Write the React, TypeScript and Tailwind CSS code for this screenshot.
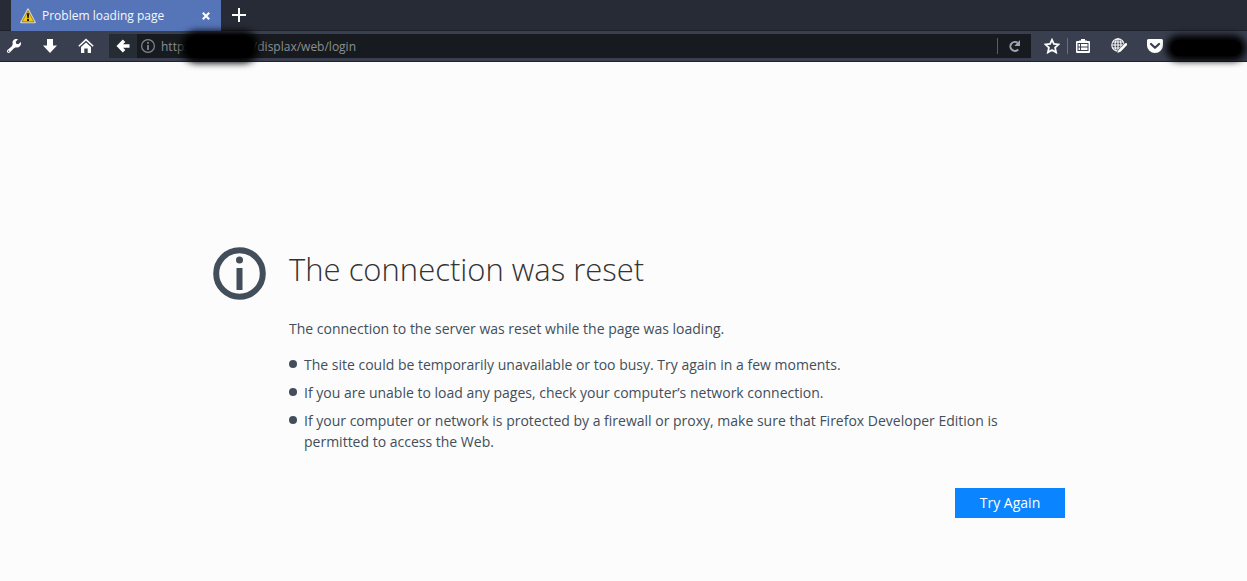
import { useState } from 'react'

const url = 'http:' + '\u00a0'.repeat(21) + '/displax/web/login'

const tips = [
  'The site could be temporarily unavailable or too busy. Try again in a few moments.',
  'If you are unable to load any pages, check your computer’s network connection.',
  'If your computer or network is protected by a firewall or proxy, make sure that Firefox Developer Edition is permitted to access the Web.',
]

function WarningIcon() {
  return (
    <svg viewBox="0 0 16 16" className="h-4 w-4 shrink-0">
      <path d="M8 1.2 15 14.4H1Z" fill="#f5d020" stroke="#d9d6c4" strokeWidth="1.6" strokeLinejoin="round" />
      <path d="M8 2.6 14 13.8H2Z" fill="#f2c811" stroke="#6b5a12" strokeWidth=".6" strokeLinejoin="round" />
      <path d="M6.8 5.2h2.4L8.700 10.200H7.300ZM7 11h2v2H7Z" fill="#1b1b1b" />
    </svg>
  )
}

function WrenchIcon() {
  return (
    <svg viewBox="0 0 16 16" className="h-4 w-4">
      <path
        d="M14.800 4 12.300 6.200 10.200 5.700 9.700 3.700 12 1.300C10.300.6 8.500 1 7.400 2.200 6.500 3.300 6.300 4.700 6.800 6L5.800 8.200 1.500 12C.8 12.600.7 13.700 1.400 14.400 2.100 15.100 3.200 15 3.800 14.400L8 10.200 10 9.300C11.400 9.700 12.900 9.400 13.900 8.300 15 7.100 15.300 5.500 14.800 4ZM2.700 13.900A.7.7 0 1 1 2.700 12.500 .7.7 0 0 1 2.700 13.900Z"
        fill="#fff"
        fillRule="evenodd"
      />
    </svg>
  )
}

function DownloadIcon() {
  return (
    <svg viewBox="0 0 16 16" className="h-4 w-4">
      <path d="M5 1h6v6.500h4L8 15 1 7.500h4Z" fill="#fff" />
    </svg>
  )
}

function HomeIcon() {
  return (
    <svg viewBox="0 0 16 16" className="h-4 w-4">
      <path d="M.8 8.300 8 1.600l7.200 6.700" fill="none" stroke="#fff" strokeWidth="1.500" />
      <path d="m8 4.400 5 4.700V15H9.700v-4.500H6.300V15H3V9.100Z" fill="#fff" />
    </svg>
  )
}

function BackIcon() {
  return (
    <svg viewBox="0 0 16 16" className="h-4 w-4">
      <path d="M7.800 1.500 10.300 3.900 8.100 6.300H14.500V9.700H8.100L10.300 12.100 7.800 14.500 1.500 8Z" fill="#fff" />
    </svg>
  )
}

function InfoIcon() {
  return (
    <svg viewBox="0 0 16 16" className="h-4 w-4 shrink-0">
      <circle cx="8" cy="8" r="6.400" fill="none" stroke="#84888c" strokeWidth="1.200" />
      <path d="M7.100 4h1.800v1.800H7.100ZM7.100 7h1.800v5H7.100Z" fill="#84888c" />
    </svg>
  )
}

function ReloadIcon() {
  return (
    <svg viewBox="0 0 16 16" className="h-4 w-4">
      <path d="M11.200 11.500A4.500 4.500 0 1 1 10.600 4.800" fill="none" stroke="#9aa5b0" strokeWidth="2" />
      <path d="M13 2v6H7.300Z" fill="#9aa5b0" />
    </svg>
  )
}

function StarIcon() {
  return (
    <svg viewBox="0 0 16 16" className="h-4 w-4">
      <path
        d="m8 1.800 1.900 4.100 4.700.500-3.500 3.200 1 4.800L8 12l-4.100 2.400 1-4.800-3.500-3.200 4.700-.500Z"
        fill="none"
        stroke="#fff"
        strokeWidth="1.800"
      />
    </svg>
  )
}

function ClipboardIcon() {
  return (
    <svg viewBox="0 0 16 16" className="h-4 w-4">
      <path d="M6 1h4v1.500h2V3h2a1 1 0 0 1 1 1v10a1 1 0 0 1-1 1H2a1 1 0 0 1-1-1V4a1 1 0 0 1 1-1h2v-.500h2Z" fill="#fff" />
      <path d="M3 5.500h10M3 9h10M3 12.500h10" stroke="#393f4f" strokeWidth="1" />
      <path d="M3 5v8M5.500 5v8M13 5v8" stroke="#393f4f" strokeWidth="1" />
    </svg>
  )
}

function GlobeIcon() {
  return (
    <svg viewBox="0 0 16 16" className="h-4 w-4">
      <g fill="none" stroke="#fff" strokeWidth="1.100">
        <circle cx="7" cy="7" r="6.200" />
        <ellipse cx="7" cy="7" rx="3" ry="6.200" />
        <path d="M7 1v12.400M1 7h12.400M2 4h10M2 10h10" />
      </g>
      <path d="m15.500 6.500-8 8" stroke="#393f4f" strokeWidth="4.400" />
      <path d="m14.900 6.300-6 6.200" stroke="#fff" strokeWidth="2.600" strokeLinecap="round" />
      <path d="m7.400 11.900 2 1.900-3 1.300Z" fill="#fff" />
    </svg>
  )
}

function PocketIcon() {
  return (
    <svg viewBox="0 0 16 16" className="h-4 w-4">
      <path d="M1.500 1h13A1.500 1.500 0 0 1 16 2.500V7.500a8 7.500 0 0 1-16 0V2.500A1.500 1.500 0 0 1 1.500 1Z" fill="#fff" />
      <path d="m4 6 4 3.800L12 6" fill="none" stroke="#393f4f" strokeWidth="2.200" strokeLinecap="round" strokeLinejoin="round" />
    </svg>
  )
}

export default function App() {
  const [address, setAddress] = useState(url)

  return (
    <div className="flex min-h-screen flex-col bg-[#fcfcfc] font-['Open_Sans',sans-serif] text-[#424e5a]">
      <div className="flex h-[31px] items-stretch border-b border-[#1e212a] bg-[#272b35] pl-[11px]">
        <div className="-mb-px flex w-[210px] items-center gap-[6px] bg-[#5675b9] pr-[7px] pl-[9px] text-xs text-[#f5f7fa]">
          <WarningIcon />
          <span className="flex-1 whitespace-nowrap">Problem loading page</span>
          <button aria-label="Close tab" className="flex h-4 w-4 items-center justify-center">
            <svg viewBox="0 0 8 8" className="h-2 w-2">
              <path d="m.8.800 6.400 6.400M7.200.800.800 7.200" stroke="#fff" strokeWidth="2" />
            </svg>
          </button>
        </div>
        <button aria-label="New tab" className="flex w-9 items-center justify-center">
          <svg viewBox="0 0 14 14" className="h-3.5 w-3.5">
            <path d="M7 0v14M0 7h14" stroke="#fff" strokeWidth="2" />
          </svg>
        </button>
      </div>

      <div className="flex h-[31px] items-center border-b border-[#1f222b] bg-[#393f4f] pl-[6px]">
        <div className="flex gap-5">
          <button aria-label="Developer tools"><WrenchIcon /></button>
          <button aria-label="Downloads"><DownloadIcon /></button>
          <button aria-label="Home"><HomeIcon /></button>
        </div>
        <div className="relative ml-[15px] flex h-6 flex-1 items-center bg-[#171b1f]">
          <button aria-label="Back" className="flex h-6 w-7 items-center justify-center bg-[#252c33]"><BackIcon /></button>
          <div className="flex flex-1 items-center gap-[5px] pl-[3px]">
            <InfoIcon />
            <input
              aria-label="Address"
              value={address}
              onChange={(e) => setAddress(e.target.value)}
              className="min-w-0 flex-1 bg-transparent pt-0.5 text-xs text-[#8b8f94] outline-none"
            />
          </div>
          <button aria-label="Reload" className="flex h-4 w-[34px] items-center justify-center border-l border-[#5b5f64]"><ReloadIcon /></button>
          <div className="absolute top-0.5 left-[77px] h-[22px] w-[68px] rounded-xl bg-black shadow-[0_0_7px_5px_#000]" />
        </div>
        <div className="relative flex items-center pr-[84px] pl-[13px]">
          <button aria-label="Bookmark this page"><StarIcon /></button>
          <div className="mx-[7px] h-4 w-px bg-[#6a7080]" />
          <button aria-label="Show bookmarks"><ClipboardIcon /></button>
          <button aria-label="Web developer" className="ml-5"><GlobeIcon /></button>
          <button aria-label="Save to Pocket" className="ml-5"><PocketIcon /></button>
          <div className="absolute right-1.5 -bottom-0.5 h-4 w-[70px] rounded-lg bg-black shadow-[0_0_7px_5px_#000]" />
        </div>
      </div>

      <main className="mx-auto w-full max-w-[883px] pt-[184px] pl-[31px]">
        <div className="flex items-start gap-[23px]">
          <svg viewBox="0 0 53 53" className="mt-px h-[53px] w-[53px] shrink-0">
            <circle cx="26.500" cy="26.500" r="23.300" fill="none" stroke="#424e5a" strokeWidth="6" />
            <circle cx="26.500" cy="13" r="3.500" fill="#424e5a" />
            <path d="M23.500 21h6v22h-6Z" fill="#424e5a" />
          </svg>
          <div className="flex-1">
            <h1 className="text-[31px] leading-[46px] font-light text-[#333]">The connection was reset</h1>
            <p className="mt-[26px] text-sm leading-[21px]">The connection to the server was reset while the page was loading.</p>
            <ul className="mt-[15px] flex flex-col gap-[7px] text-sm leading-[21px]">
              {tips.map((tip) => (
                <li key={tip} className="flex gap-[7px] pr-10">
                  <span className="mt-[6px] h-2 w-2 shrink-0 rounded-full bg-[#424e5a]" />
                  <span>{tip}</span>
                </li>
              ))}
            </ul>
          </div>
        </div>
        <div className="mt-9 flex justify-end">
          <button className="h-[30px] w-[110px] bg-[#0a84ff] text-sm text-white">Try Again</button>
        </div>
      </main>
    </div>
  )
}
